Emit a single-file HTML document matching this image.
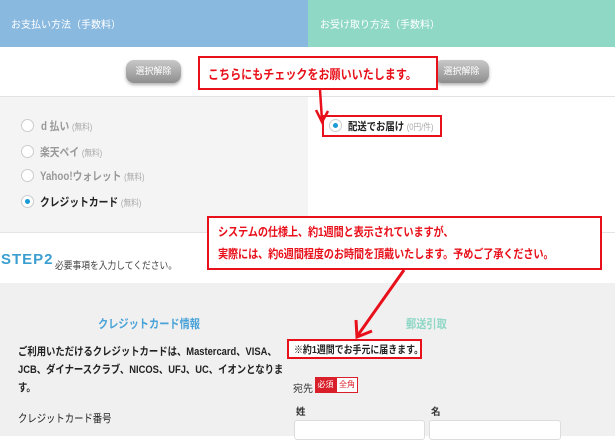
<!DOCTYPE html>
<html><head><meta charset="utf-8"><style>
*{margin:0;padding:0;box-sizing:border-box}
body{width:615px;height:436px;overflow:hidden;background:#fff;font-family:"Liberation Sans","Noto Sans CJK JP",sans-serif;position:relative;color:#333}
.a{position:absolute;white-space:nowrap}
.rad{position:absolute;width:13px;height:13px;border:1px solid #ccc;border-radius:50%;background:#fff}
.rad.on::after{content:"";position:absolute;left:3px;top:3px;width:5px;height:5px;border-radius:50%;background:#1a9ad6}
.btn{position:absolute;width:55px;height:23px;border-radius:8px;background:linear-gradient(#c8c8c8,#8e8e8e);box-shadow:0 2px 3px rgba(0,0,0,.3);color:#fff;font-size:9px;text-align:center;line-height:23px}
.red{color:#e8101a;font-weight:bold}
.box{position:absolute;border:2px solid #e8101a;background:#fff}
.g{color:#aaa;font-size:9px;font-weight:normal}
.sx{transform-origin:0 0;transform:scaleX(.85)}
</style></head><body>
<div class="a" style="left:0;top:0;width:308px;height:47px;background:#8ab9e0"></div>
<div class="a" style="left:308px;top:0;width:307px;height:47px;background:#8fd8c6"></div>
<div class="a" style="left:11px;top:16px;color:#fff;font-size:10px">お支払い方法（手数料）</div>
<div class="a" style="left:320px;top:16px;color:#fff;font-size:10px">お受け取り方法（手数料）</div>
<div class="btn" style="left:126px;top:60px">選択解除</div>
<div class="btn" style="left:434px;top:60px">選択解除</div>
<div class="a" style="left:0;top:96px;width:615px;height:1px;background:#e2e2e2"></div>
<div class="a" style="left:0;top:97px;width:308px;height:135px;background:#f4f4f4"></div>
<div class="rad" style="left:21px;top:119px"></div><div class="a sx" style="left:41px;top:118px;font-size:11.5px;color:#999;font-weight:bold">d 払い <span class="g">(無料)</span></div>
<div class="rad" style="left:21px;top:145px"></div><div class="a sx" style="left:40px;top:144px;font-size:11.5px;color:#999;font-weight:bold">楽天ペイ <span class="g">(無料)</span></div>
<div class="rad" style="left:21px;top:169px"></div><div class="a sx" style="left:40px;top:168px;font-size:11.5px;color:#999;font-weight:bold">Yahoo!ウォレット <span class="g">(無料)</span></div>
<div class="rad on" style="left:21px;top:195px"></div><div class="a sx" style="left:40px;top:194px;font-size:11.5px;color:#222;font-weight:bold">クレジットカード <span class="g">(無料)</span></div>
<div class="a" style="left:0;top:232px;width:615px;height:1px;background:#e4e4e4"></div>
<div class="a" style="left:1px;top:251px;font-size:15px;font-weight:bold;color:#3a9fd0;letter-spacing:1px">STEP2</div>
<div class="a sx" style="left:55px;top:257px;font-size:10.3px;color:#444">必要事項を入力してください。</div>
<div class="a" style="left:0;top:283px;width:615px;height:153px;background:#f0f0f0"></div>
<div class="a sx" style="left:98px;top:315px;font-size:12px;font-weight:bold;color:#4aa3d8">クレジットカード情報</div>
<div class="a sx" style="left:406px;top:315px;font-size:12px;font-weight:bold;color:#8fd8c6">郵送引取</div>
<div class="a sx" style="left:18px;top:343px;font-size:11px;line-height:18px;color:#222;font-weight:bold">ご利用いただけるクレジットカードは、Mastercard、VISA、<br>JCB、ダイナースクラブ、NICOS、UFJ、UC、イオンとなりま<br>す。</div>
<div class="a sx" style="left:18px;top:410px;font-size:11px;color:#222">クレジットカード番号</div>
<div class="a" style="left:293px;top:380px;font-size:10px">宛先</div>
<div class="a" style="left:315px;top:377px;width:21px;height:16px;background:#d9202a;color:#fff;font-size:8px;text-align:center;line-height:16px">必須</div>
<div class="a" style="left:336px;top:377px;width:22px;height:16px;border:1px solid #d9202a;background:#fff;color:#d9202a;font-size:8px;text-align:center;line-height:14px">全角</div>
<div class="a" style="left:296px;top:404px;font-size:9.5px;font-weight:bold">姓</div>
<div class="a" style="left:431px;top:404px;font-size:9.5px;font-weight:bold">名</div>
<div class="a" style="left:294px;top:420px;width:131px;height:20px;background:#fff;border:1px solid #ddd;border-radius:3px"></div>
<div class="a" style="left:429px;top:420px;width:132px;height:20px;background:#fff;border:1px solid #ddd;border-radius:3px"></div>
<div class="box" style="left:198px;top:56px;width:240px;height:34px"></div>
<div class="a red sx" style="left:208px;top:64px;font-size:13px">こちらにもチェックをお願いいたします。</div>
<div class="box" style="left:322px;top:115px;width:120px;height:22px"></div>
<div class="rad on" style="left:329px;top:119px"></div>
<div class="a sx" style="left:348px;top:118px;font-size:11px;font-weight:bold;color:#222">配送でお届け <span class="g">(0円/件)</span></div>
<div class="box" style="left:207px;top:216px;width:395px;height:54px"></div>
<div class="a red sx" style="left:218px;top:221px;font-size:12px;line-height:22px;letter-spacing:-0.2px">システムの仕様上、約1週間と表示されていますが、<br>実際には、約6週間程度のお時間を頂戴いたします。予めご了承ください。</div>
<div class="box" style="left:287px;top:339px;width:135px;height:20px"></div>
<div class="a sx" style="left:294px;top:342px;font-size:10.5px;color:#222;font-weight:bold">※約1週間でお手元に届きます。</div>
<svg class="a" style="left:0;top:0" width="615" height="436">
<line x1="320" y1="90" x2="322" y2="120" stroke="#e8101a" stroke-width="2.5"/>
<polyline points="316,110 322,122 328,111" fill="none" stroke="#e8101a" stroke-width="2.5"/>
<line x1="404" y1="270" x2="358" y2="335" stroke="#e8101a" stroke-width="3"/>
<polyline points="356,320 357,337 372,331" fill="none" stroke="#e8101a" stroke-width="3"/>
</svg>
</body></html>
